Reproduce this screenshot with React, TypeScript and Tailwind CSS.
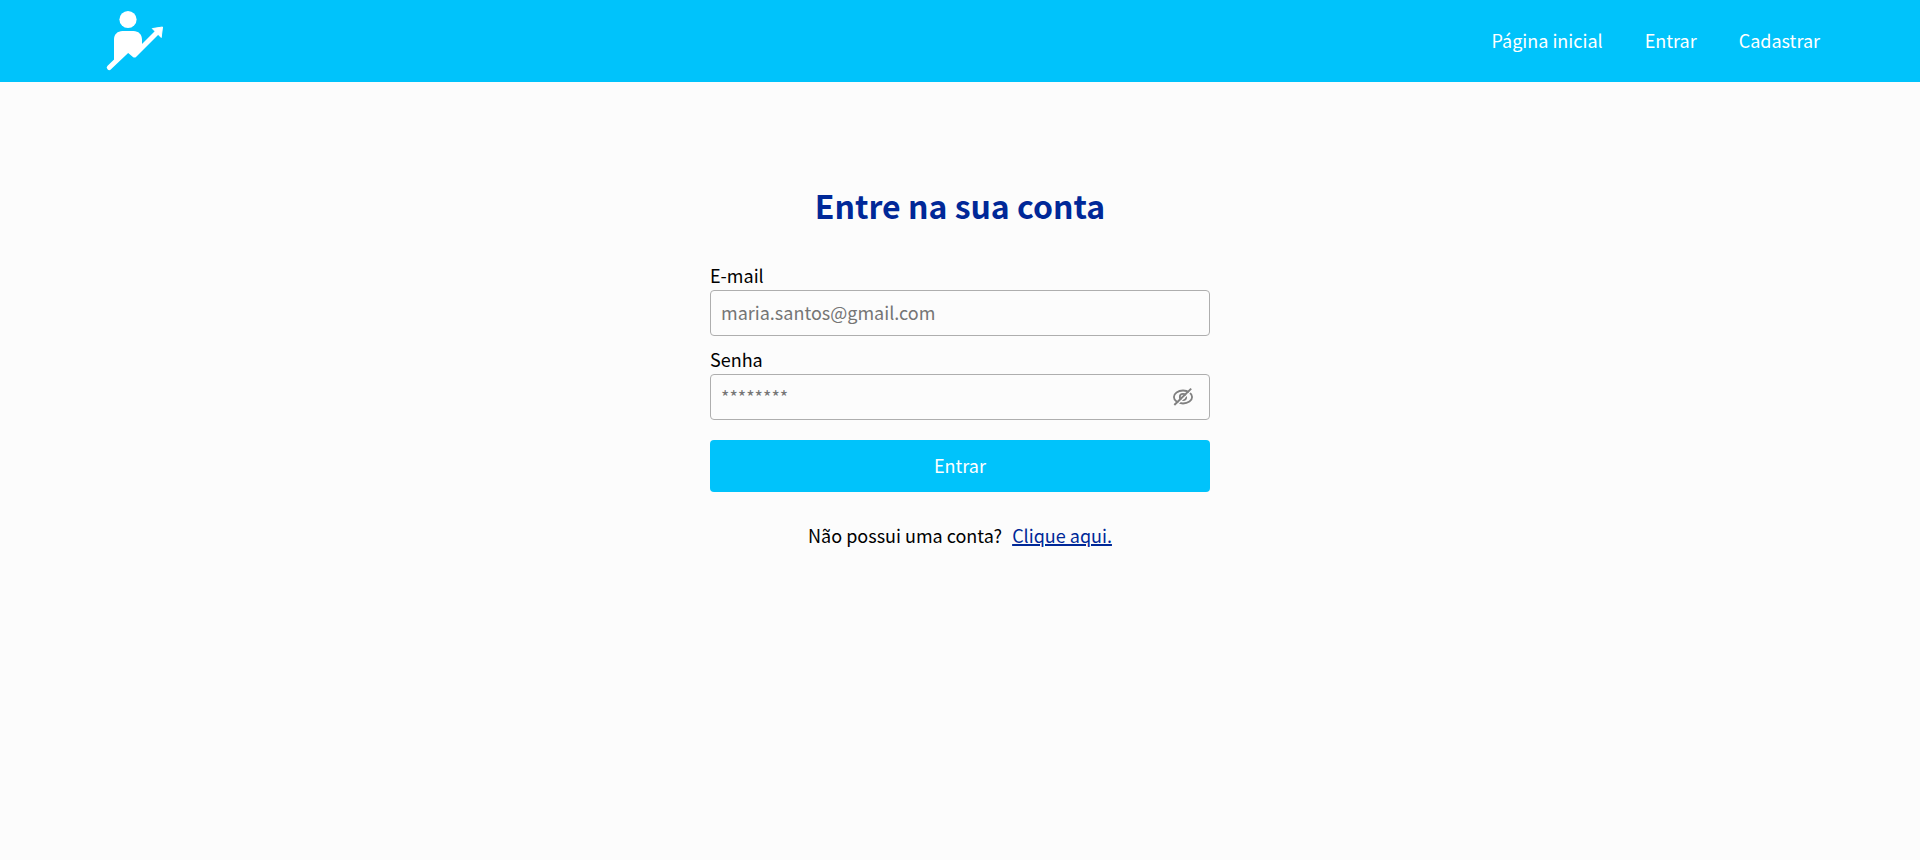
import { useState } from "react";

function Logo() {
  return (
    <svg viewBox="0 4 66 66" className="size-[66px]" fill="none" aria-hidden="true">
      <circle cx="28" cy="15.5" r="8.6" fill="#fff" />
      <path d="M14 59V35.5C14 30.5 17.5 27 22.500 27h11C38.500 27 42 30.500 42 35.500V44L34.500 50.500L28.500 47.500L18 57Z" fill="#fff" />
      <path d="M9.300 63.500L28 45.600L34.500 51L58 27.500" stroke="#fff" strokeWidth="5" strokeLinecap="round" strokeLinejoin="round" />
      <path d="M52.300 24.600L62.500 23L61.200 33.500Z" fill="#fff" stroke="#fff" strokeWidth="1" strokeLinejoin="round" />
    </svg>
  );
}

function EyeSlash() {
  return (
    <svg viewBox="0 0 24 24" className="size-6" fill="none" stroke="#808080" strokeWidth="1.8" aria-hidden="true">
      <ellipse cx="12" cy="12" rx="9.100" ry="6.500" />
      <circle cx="12" cy="12" r="3.200" />
      <path d="M5.500 20.200L21.400 4.800" stroke="#fcfcfc" strokeWidth="1.400" />
      <path d="M3.300 20L20.200 3.600" strokeWidth="2" />
    </svg>
  );
}

const navLinks = ["Página inicial", "Entrar", "Cadastrar"];

export default function App() {
  const [visible, setVisible] = useState(false);
  const field =
    "h-[46px] w-full rounded-[4px] border border-[#aeaeae] bg-transparent px-2.5 pb-0.5 placeholder:text-[#757575]";

  return (
    <div className="min-h-screen bg-[#fcfcfc] font-['Noto_Sans_CJK_SC',sans-serif] text-lg leading-6 text-black">
      <header className="flex h-[82px] items-center justify-between bg-[#00c3fb] px-[100px]">
        <a href="#" aria-label="Página inicial">
          <Logo />
        </a>
        <nav className="flex gap-[42px] pb-0.5 text-white">
          {navLinks.map((label) => (
            <a key={label} href="#">
              {label}
            </a>
          ))}
        </nav>
      </header>

      <main className="mx-auto flex max-w-[500px] flex-col pt-[99px]">
        <h1 className="text-center text-[32px] leading-12 font-bold text-[#002898]">Entre na sua conta</h1>

        <form className="mt-[34px] flex flex-col" onSubmit={(e) => e.preventDefault()}>
          <label htmlFor="email" className="mb-[3px]">E-mail</label>
          <input id="email" type="email" placeholder="maria.santos@gmail.com" className={field} />

          <label htmlFor="senha" className="mt-[11px] mb-[3px]">Senha</label>
          <div className="relative">
            <input id="senha" type={visible ? "text" : "password"} placeholder="********" className={field} />
            <button
              type="button"
              aria-label="Mostrar senha"
              onClick={() => setVisible(!visible)}
              className="absolute inset-y-0 right-[15px] flex items-center"
            >
              <EyeSlash />
            </button>
          </div>

          <button type="submit" className="mt-5 h-[52px] rounded-[4px] bg-[#00c3fb] pb-0.5 text-white">
            Entrar
          </button>
        </form>

        <p className="mt-[31px] flex justify-center gap-2.5">
          Não possui uma conta?
          <a href="#" className="text-[#002898] underline decoration-2">Clique aqui.</a>
        </p>
      </main>
    </div>
  );
}
